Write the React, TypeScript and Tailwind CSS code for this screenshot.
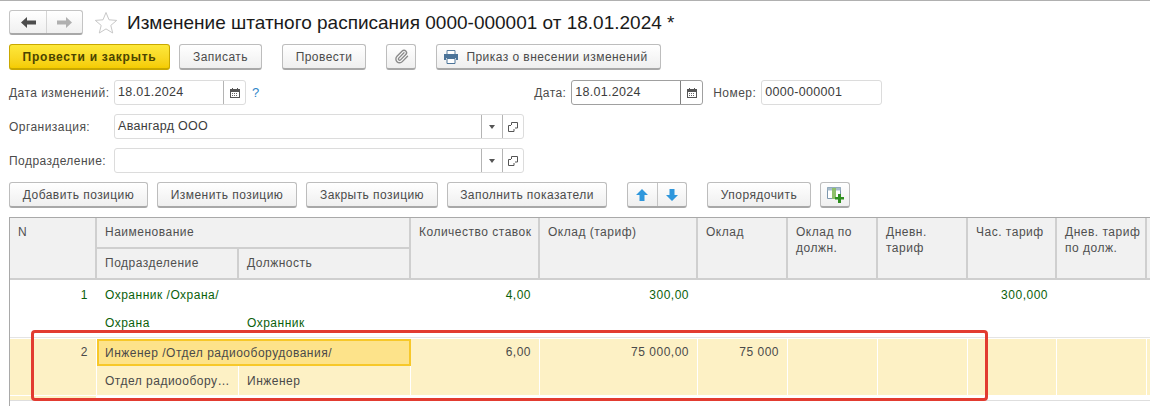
import type { ReactNode } from "react";
import { Paperclip } from "lucide-react";

const font = "font-['Liberation_Sans',Arial,sans-serif]";

function Btn({ width, children, className = "" }: { width: string; children: ReactNode; className?: string }) {
  return (
    <button
      type="button"
      className={`flex h-[26px] shrink-0 items-center justify-center rounded-[3px] border border-[#bdbdbd] border-b-2 border-b-[#a8a8a8] bg-gradient-to-b from-white to-[#efefef] text-[12px] tracking-[0.45px] text-[#4b4b4b] ${width} ${className}`}
    >
      {children}
    </button>
  );
}

function CalendarIcon() {
  return (
    <svg width="10" height="10" viewBox="0 0 10 10">
      <path d="M0 1h10v9H0z" fill="#555" />
      <path d="M2 0h1v2H2zM7 0h1v2H7z" fill="#555" />
      <path d="M1 4h8v5H1z" fill="#fff" />
      <path d="M2 5h1v1H2zM4 5h1v1H4zM6 5h1v1H6zM2 7h1v1H2zM4 7h1v1H4zM6 7h1v1H6z" fill="#666" />
    </svg>
  );
}

function OpenIcon() {
  return (
    <svg width="10" height="10" viewBox="0 0 10 10" fill="none" stroke="#555">
      <path d="M3.500 3V.5h6v5.500H7" />
      <path d="M3 3.500H.5v6h5.500V7" />
    </svg>
  );
}

function SelectField({ label }: { label: string }) {
  return (
    <div className="flex h-[25px] items-center">
      <span className="w-[105px] shrink-0 text-[12px] tracking-[0.45px] text-[#4b4b4b]">{label}</span>
      <div className="flex h-[25px] w-[410px] items-center rounded-[3px] border border-[#dcdcdc] bg-white">
        <span className="flex-1 pl-[3px] text-[12.5px] tracking-[0.3px] text-[#3c3c3c]">
          {label === "Организация:" ? "Авангард ООО" : ""}
        </span>
        <span className="flex h-full w-[21px] items-center justify-center border-l border-[#b4b4b4]">
          <span className="border-x-[3.5px] border-t-[4px] border-x-transparent border-t-[#555]" />
        </span>
        <span className="flex h-full w-[21px] items-center justify-center border-l border-[#b4b4b4]">
          <OpenIcon />
        </span>
      </div>
    </div>
  );
}

function DateField({ dark }: { dark?: boolean }) {
  return (
    <div className={`flex h-[25px] w-[132px] items-center rounded-[3px] border bg-white ${dark ? "border-[#a0a0a0]" : "border-[#dcdcdc]"}`}>
      <span className="flex-1 pl-[3px] text-[12.5px] tracking-[0.3px] text-[#3c3c3c]">18.01.2024</span>
      <span className={`flex h-full w-[22px] items-center justify-center border-l ${dark ? "border-[#808080]" : "border-[#b4b4b4]"}`}>
        <CalendarIcon />
      </span>
    </div>
  );
}

const headCell = "whitespace-pre-line border-r-2 border-[#cfcfcf] bg-[#f1f1f1] pl-[8px] pt-[6px] text-[12px] leading-[16px] tracking-[0.5px] text-[#4f4f4f]";
const greenCell = "row-start-3 border-b border-[#e4e4e4] pr-[9px] pt-[6px] text-right text-[12px] tracking-[0.5px] text-[#0b5f0b]";
const yellowCell = "mt-[1px] border-r border-white bg-[#fdf1c5] pr-[8px] pt-[4px] text-right text-[12px] tracking-[0.5px] text-[#4a4a4a]";

const headers = ["Количество ставок", "Оклад (тариф)", "Оклад", "Оклад по\nдолжн.", "Дневн.\nтариф", "Час. тариф", "Днев. тариф\nпо долж."];

export default function App() {
  return (
    <div className={`relative h-[406px] w-[1150px] overflow-hidden border-t border-[#b0b0b0] bg-white ${font}`}>
      <div className="flex h-[43px] items-start pl-[9px] pt-[9px]">
        <div className="flex h-[25px] w-[74px] rounded-[3px] border border-[#c4c4c4] border-b-2 border-b-[#a8a8a8] bg-gradient-to-b from-white to-[#f0f0f0]">
          <span className="flex w-[37px] items-center justify-center border-r border-[#d5d5d5]">
            <svg width="15" height="11" viewBox="0 0 15 11"><path d="M0 5.500 6 0v3.500h9v4H6V11z" fill="#4d4d4d" /></svg>
          </span>
          <span className="flex flex-1 items-center justify-center">
            <svg width="15" height="11" viewBox="0 0 15 11"><path d="M15 5.500 9 0v3.500H0v4h9V11z" fill="#b0b0b0" /></svg>
          </span>
        </div>
        <svg className="ml-[11px] mt-[1px]" width="24" height="23" viewBox="0 0 24 23">
          <path d="M12 1.500l3 7.300 7.700.6-5.900 5 1.900 7.600L12 17.900 5.300 22l1.900-7.600-5.900-5 7.700-.6z" fill="#fff" stroke="#c8c8c8" />
        </svg>
        <h1 className="ml-[9px] text-[19px] font-normal leading-[26px] text-[#1a1a1a]">
          Изменение штатного расписания 0000-000001 от 18.01.2024 *
        </h1>
      </div>

      <div className="flex pl-[9px]">
        <button
          type="button"
          className="h-[26px] w-[161px] rounded-[3px] border border-[#c9a800] border-b-2 bg-gradient-to-b from-[#fde83a] to-[#f5cc00] text-[12px] font-bold tracking-[0.75px] text-[#4b4400]"
        >
          Провести и закрыть
        </button>
        <Btn width="w-[83px]" className="ml-[9px]">Записать</Btn>
        <Btn width="w-[84px]" className="ml-[20px]">Провести</Btn>
        <Btn width="w-[30px]" className="ml-[20px]">
          <Paperclip size={15} color="#8a8a8a" strokeWidth={2.2} />
        </Btn>
        <Btn width="w-[225px]" className="ml-[20px] pr-[5px]">
          <svg className="mr-[8px]" width="14" height="14" viewBox="0 0 14 14">
            <path d="M3 .5h8v4H3z" fill="#fff" stroke="#5b7f9f" />
            <path d="M0 4h14v6h-2V8H2v2H0z" fill="#4c7499" />
            <path d="M3 8.500h8v5H3z" fill="#fff" stroke="#4c7499" />
          </svg>
          Приказ о внесении изменений
        </Btn>
      </div>

      <div className="mt-[10px] flex h-[25px] items-center pl-[9px]">
        <span className="w-[105px] text-[12px] tracking-[0.45px] text-[#4b4b4b]">Дата изменений:</span>
        <DateField />
        <span className="ml-[6px] text-[13px] text-[#2f86c8]">?</span>
        <span className="ml-[275px] w-[37px] text-[12px] tracking-[0.45px] text-[#4b4b4b]">Дата:</span>
        <DateField dark />
        <span className="ml-[10px] w-[48px] text-[12px] tracking-[0.45px] text-[#4b4b4b]">Номер:</span>
        <div className="flex h-[25px] w-[121px] items-center rounded-[3px] border border-[#dcdcdc] pl-[3px] text-[12.5px] tracking-[0.3px] text-[#3c3c3c]">
          0000-000001
        </div>
      </div>

      <div className="mt-[9px] flex flex-col gap-[9px] pl-[9px]">
        <SelectField label="Организация:" />
        <SelectField label="Подразделение:" />
      </div>

      <div className="mt-[9px] flex pl-[9px]">
        <Btn width="w-[139px]">Добавить позицию</Btn>
        <Btn width="w-[140px]" className="ml-[9px]">Изменить позицию</Btn>
        <Btn width="w-[132px]" className="ml-[9px]">Закрыть позицию</Btn>
        <Btn width="w-[160px]" className="ml-[9px]">Заполнить показатели</Btn>
        <Btn width="w-[60px]" className="ml-[20px]">
          <span className="flex h-full flex-1 items-center justify-center border-r border-[#c4c4c4]">
            <svg width="12" height="12" viewBox="0 0 12 12"><path d="M6 0l6 6H8.500v6h-5V6H0z" fill="#2f97dc" /></svg>
          </span>
          <span className="flex h-full flex-1 items-center justify-center">
            <svg width="12" height="12" viewBox="0 0 12 12"><path d="M6 12 0 6h3.500V0h5v6H12z" fill="#2f97dc" /></svg>
          </span>
        </Btn>
        <Btn width="w-[104px]" className="ml-[20px]">Упорядочить</Btn>
        <Btn width="w-[30px]" className="ml-[9px]">
          <svg width="17" height="16" viewBox="0 0 17 16">
            <path d="M.5.500h13v11H.5z" fill="#fff" stroke="#7d97ad" />
            <path d="M.5.500h13v3H.5z" fill="#a8bccb" />
            <path d="M5 1h4v11H5z" fill="#8fc06a" />
            <path d="M8 10h3V7h3v3h3v2.500h-3V16h-3v-3.500H8z" fill="#2f8f1f" />
          </svg>
        </Btn>
      </div>

      <div className="mt-[9px] ml-[9px] border-l border-t border-[#a9a9a9]">
        <div className="grid grid-cols-[87px_142px_172px_129px_158px_90px_90px_90px_89px_90px_3px] grid-rows-[31px_31px_58px_57px]">
          <div className={`${headCell} row-span-2 border-b-2`}>N</div>
          <div className={`${headCell} col-span-2 border-b-2`}>Наименование</div>
          {headers.map((title) => (
            <div key={title} className={`${headCell} row-span-2 border-b-2`}>{title}</div>
          ))}
          <div className="row-span-2 border-b-2 border-[#cfcfcf] bg-[#f1f1f1]" />
          <div className={`${headCell} border-b-2`}>Подразделение</div>
          <div className={`${headCell} border-b-2`}>Должность</div>

          <div className={greenCell}>1</div>
          <div className="col-span-2 row-start-3 flex flex-col border-b border-[#e4e4e4] text-[12px] tracking-[0.5px] text-[#0b5f0b]">
            <span className="pl-[8px] pt-[6px]">Охранник /Охрана/</span>
            <div className="mt-[10px] flex">
              <span className="w-[142px] pl-[8px]">Охрана</span>
              <span className="pl-[8px]">Охранник</span>
            </div>
          </div>
          <div className={greenCell}>4,00</div>
          <div className={greenCell}>300,00</div>
          <div className="col-span-3 row-start-3 border-b border-[#e4e4e4]" />
          <div className={greenCell}>300,000</div>
          <div className="col-span-2 row-start-3 border-b border-[#e4e4e4]" />

          <div className={`${yellowCell} row-start-4`}>2</div>
          <div className="col-span-2 row-start-4 mt-[1px] flex flex-col text-[12px] tracking-[0.5px] text-[#4a4a4a]">
            <div className="flex h-[27px] items-center border-2 border-[#f7c829] bg-[#fde38a] pl-[6px]">Инженер /Отдел радиооборудования/</div>
            <div className="flex flex-1">
              <span className="flex w-[142px] items-center border-r border-white bg-[#fdf1c5] pl-[8px]">Отдел радиообору…</span>
              <span className="flex flex-1 items-center border-r border-white bg-[#fdf1c5] pl-[8px]">Инженер</span>
            </div>
          </div>
          <div className={yellowCell}>6,00</div>
          <div className={yellowCell}>75 000,00</div>
          <div className={yellowCell}>75 000</div>
          <div className={yellowCell} />
          <div className={yellowCell} />
          <div className={yellowCell} />
          <div className={yellowCell} />
          <div className={yellowCell} />
          <div className={yellowCell} />
        </div>
        <div className="h-[12px] border-t border-[#dedede]" />
      </div>

      {/* annotation frame drawn over the screenshot */}
      <div className="absolute left-[31px] top-[329px] h-[71px] w-[957px] rounded-[4px] border-[3px] border-[#e23b30]" />
    </div>
  );
}
